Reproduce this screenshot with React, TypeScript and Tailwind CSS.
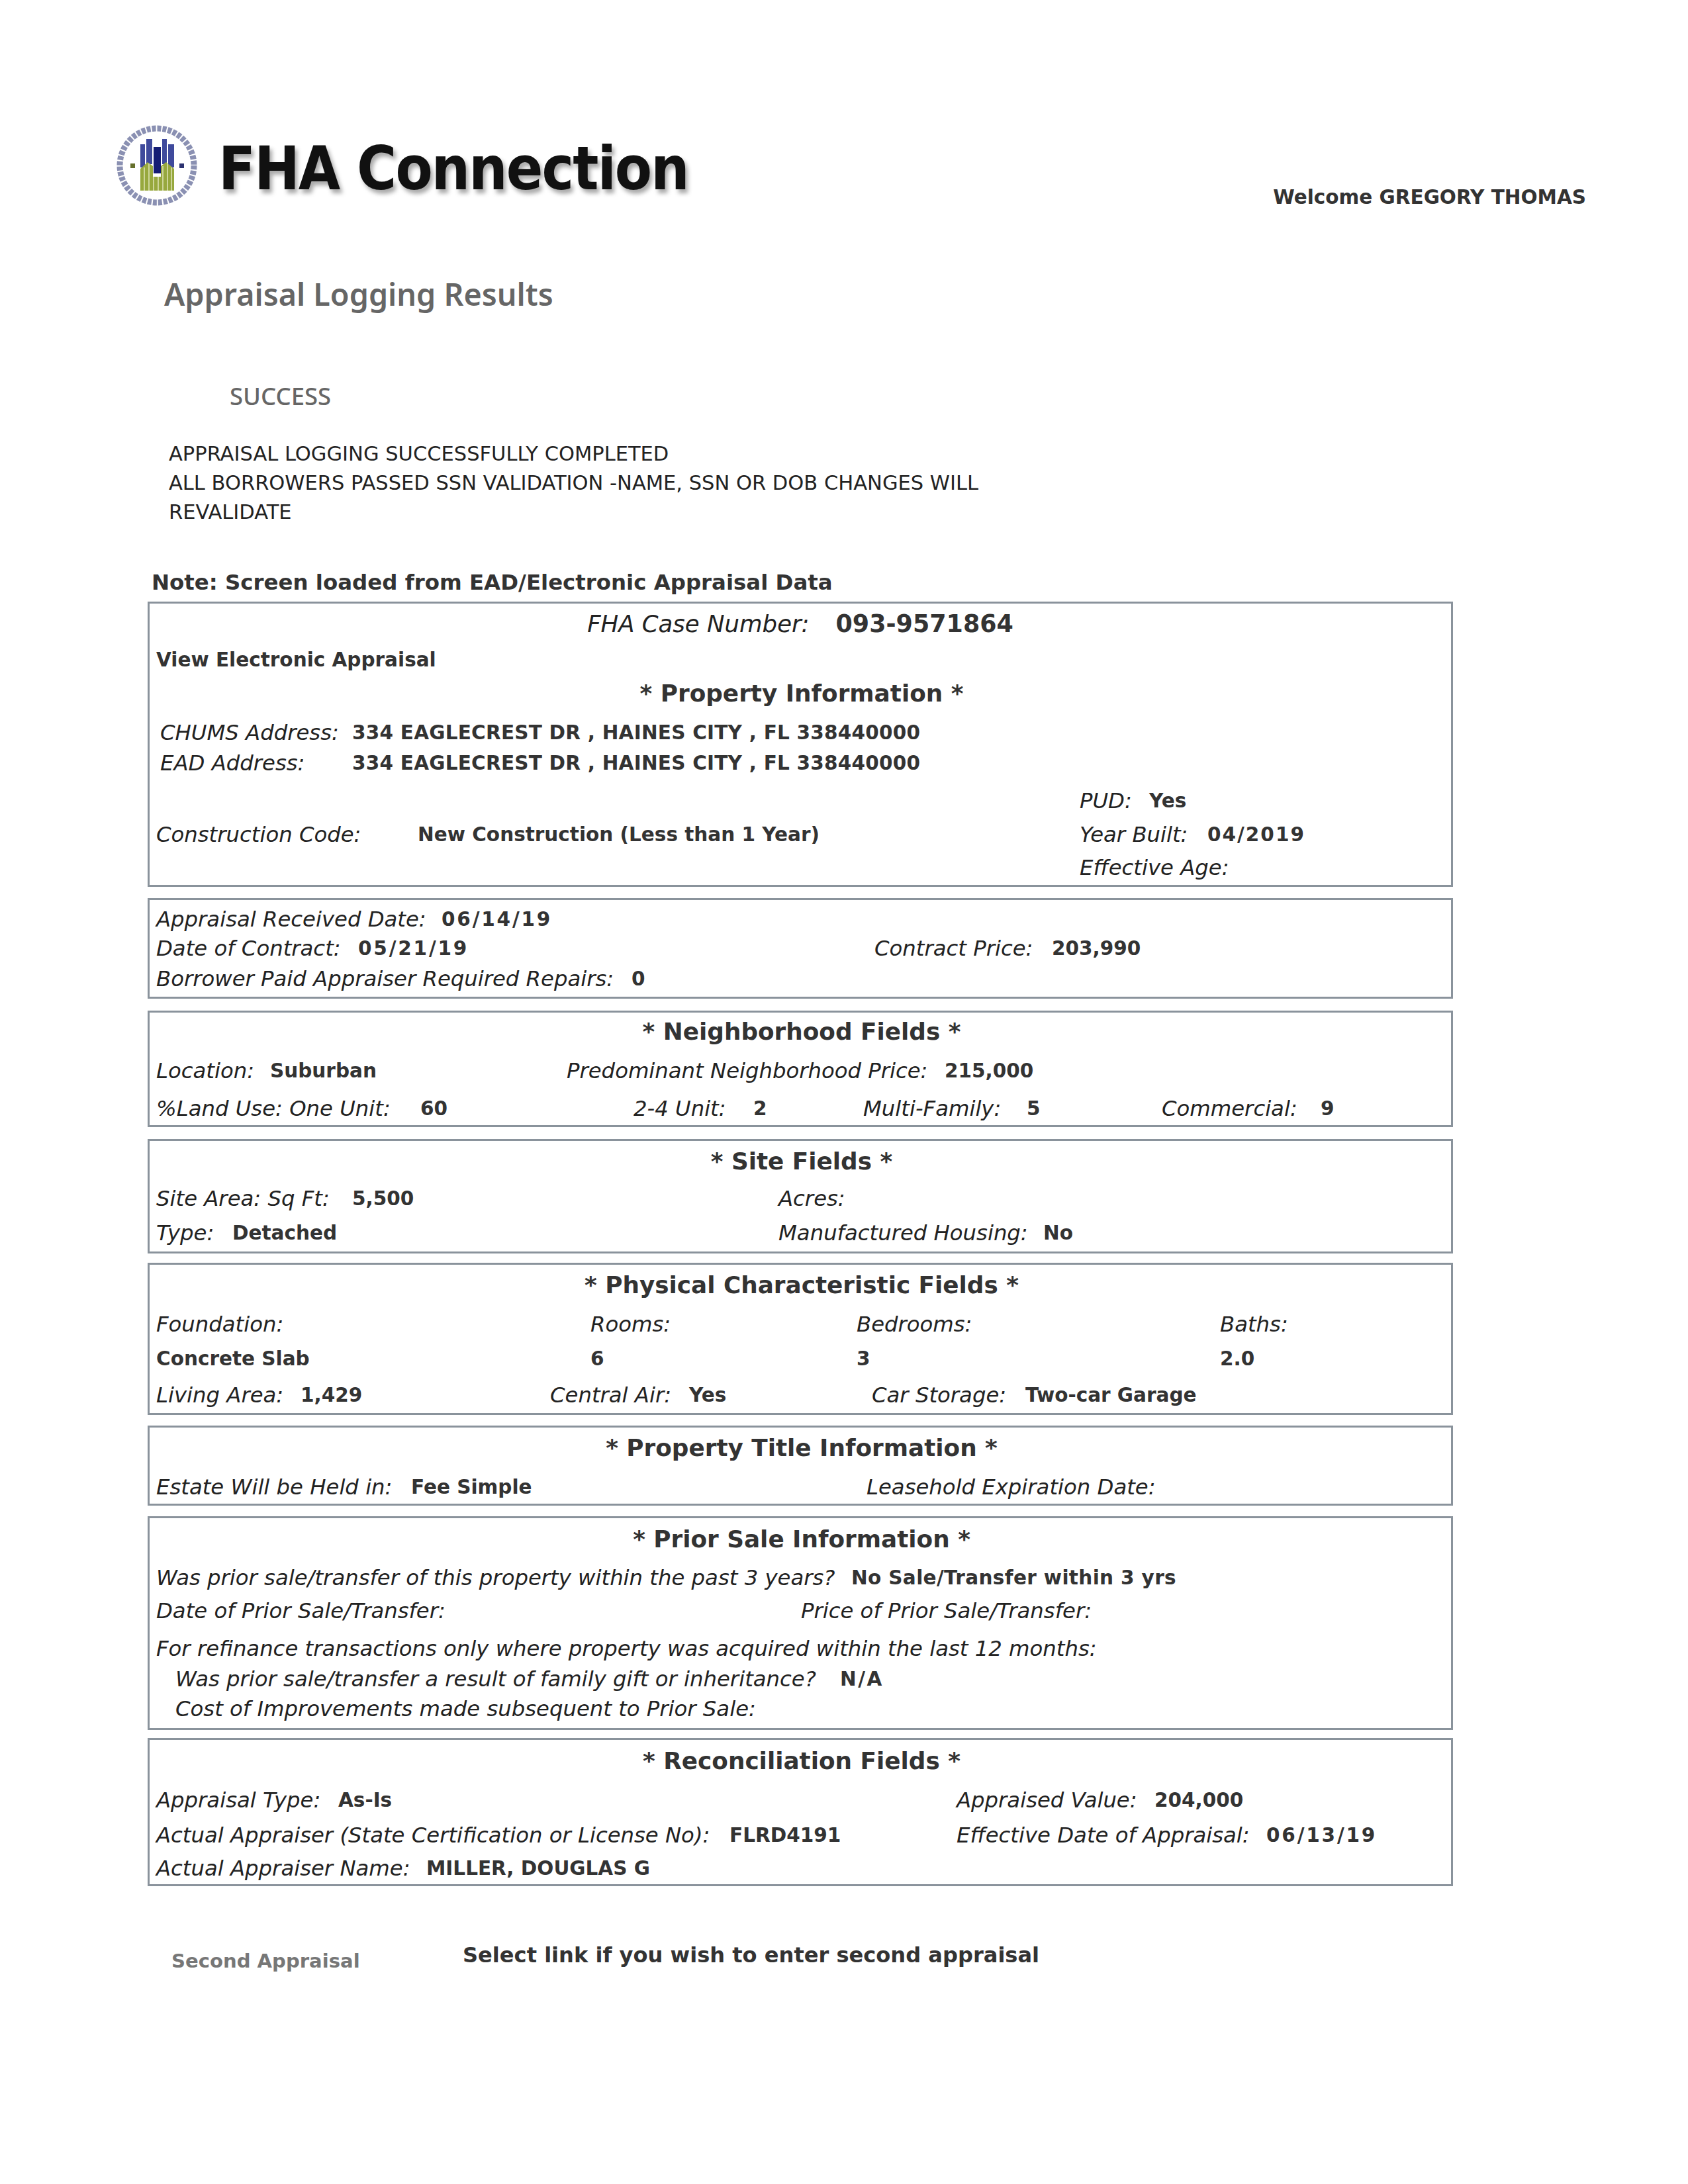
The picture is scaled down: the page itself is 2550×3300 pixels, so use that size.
import type { ReactNode } from 'react';

const Box = ({ className, children }: { className: string; children: ReactNode }) => (
  <div className={`w-[1972px] ml-[223px] border-[3px] border-[#8a939c] pl-[10px] text-[#222] box-border ${className}`}>
    {children}
  </div>
);

const Heading = ({ className, children }: { className: string; children: ReactNode }) => (
  <div className={`flex items-center justify-center font-bold text-[35.8px] text-[#333] pr-[6px] ${className}`}>{children}</div>
);

const L = ({ className = '', children }: { className?: string; children?: ReactNode }) => (
  <span className={`italic text-[32.3px] text-[#222] shrink-0 whitespace-nowrap ${className}`}>{children}</span>
);

const V = ({ className = '', children }: { className?: string; children?: ReactNode }) => (
  <span className={`font-bold text-[29.5px] text-[#333] shrink-0 whitespace-nowrap ${className}`}>{children}</span>
);

function Logo() {
  return (
    <svg viewBox="0 0 130 130" className="w-[130px] h-[130px] shrink-0 blur-[0.7px]">
      <circle cx="66" cy="65" r="56" fill="none" stroke="#8a90b2" strokeWidth="9" strokeDasharray="6 2" />
      <path d="M41 33h7v35h-7zM50 25h9v38h-9zM74 25h7v38h-7zM83 33h9v35h-9z" fill="#3f4a9c" />
      <path d="M61 37h11v40H61z" fill="#141c74" />
      <path d="M41 70l11-10 8 6v16h12V66l8-6 12 10v33H41z" fill="#97a83e" />
      <path d="M47 68v35M54 62v41M61 82v21M68 82v21M75 66v37M82 62v41M88 68v35" stroke="#dfe4b8" strokeWidth="1.5" />
      <rect x="26" y="62" width="7" height="7" fill="#66702c" />
      <rect x="100" y="62" width="7" height="7" fill="#2c3270" />
    </svg>
  );
}

export default function App() {
  return (
    <div className="w-[2550px] h-[3300px] bg-white font-['DejaVu_Sans',sans-serif] overflow-hidden">
      {/* Banner */}
      <div className="h-[185px]" />
      <div className="h-[130px] pl-[171px] flex items-center">
        <Logo />
        <span className="ml-[29px] mt-[8px] [font-stretch:condensed] font-bold text-[91px] tracking-[-1.8px] leading-none text-[#111] [text-shadow:4px_6px_6px_#aaa]">
          FHA Connection
        </span>
        <span className="ml-auto mr-[154px] mt-[96px] font-bold text-[29.5px] text-[#333]">Welcome GREGORY THOMAS</span>
      </div>

      <div className="mt-[106px] ml-[248px] h-[46px] flex items-center font-['Noto_Sans',sans-serif] font-semibold text-[46.7px] text-[#666]">
        Appraisal Logging Results
      </div>
      <div className="mt-[108px] ml-[347px] h-[46px] flex items-center font-['Noto_Sans',sans-serif] font-medium text-[36.5px] text-[#666]">
        SUCCESS
      </div>

      <div className="mt-[43px] ml-[255px] w-[1300px] text-[30.5px] leading-[44px] text-[#222]">
        <div>APPRAISAL LOGGING SUCCESSFULLY COMPLETED</div>
        <div>ALL BORROWERS PASSED SSN VALIDATION -NAME, SSN OR DOB CHANGES WILL</div>
        <div>REVALIDATE</div>
      </div>

      <div className="mt-[64px] ml-[229px] h-[40px] flex items-center font-bold text-[32.4px] text-[#333]">
        Note: Screen loaded from EAD/Electronic Appraisal Data
      </div>

      {/* Property */}
      <Box className="mt-[9px] h-[431px]">
        <div className="h-[62px] flex items-center justify-center pr-[10px]">
          <L className="text-[35.5px]">FHA Case Number:</L>
          <span className="ml-[40px] font-bold text-[36.4px] text-[#333]">093-9571864</span>
        </div>
        <div className="h-[46px] flex items-center"><V>View Electronic Appraisal</V></div>
        <Heading className="h-[56px]">* Property Information *</Heading>
        <div className="h-[46px] mt-[8px] flex items-center pl-[6px]"><L className="w-[290px]">CHUMS Address:</L><V className="tracking-[0.23px]">334 EAGLECREST DR , HAINES CITY , FL 338440000</V></div>
        <div className="h-[46px] flex items-center pl-[6px]"><L className="w-[290px]">EAD Address:</L><V className="tracking-[0.23px]">334 EAGLECREST DR , HAINES CITY , FL 338440000</V></div>
        <div className="flex mt-[9px]">
          <div className="w-[1395px] flex items-center">
            <L className="w-[395px]">Construction Code:</L>
            <V>New Construction (Less than 1 Year)</V>
          </div>
          <div>
            <div className="h-[51px] flex items-center"><L className="w-[105px]">PUD:</L><V>Yes</V></div>
            <div className="h-[50px] flex items-center"><L className="w-[193px]">Year Built:</L><V className="tracking-[2px]">04/2019</V></div>
            <div className="h-[51px] flex items-center"><L>Effective Age:</L></div>
          </div>
        </div>
      </Box>

      {/* Dates */}
      <Box className="mt-[17px] h-[152px]">
        <div className="h-[44px] mt-[7px] flex items-center"><L className="w-[431px]">Appraisal Received Date:</L><V className="tracking-[2.8px]">06/14/19</V></div>
        <div className="h-[45px] flex items-center">
          <L className="w-[305px]">Date of Contract:</L><V className="w-[780px] tracking-[2.8px]">05/21/19</V>
          <L className="w-[268px]">Contract Price:</L><V>203,990</V>
        </div>
        <div className="h-[46px] flex items-center"><L className="w-[718px]">Borrower Paid Appraiser Required Repairs:</L><V>0</V></div>
      </Box>

      {/* Neighborhood */}
      <Box className="mt-[18px] h-[176px]">
        <Heading className="h-[58px]">* Neighborhood Fields *</Heading>
        <div className="h-[60px] flex items-center">
          <L className="w-[172px]">Location:</L><V className="w-[448px]">Suburban</V>
          <L className="w-[571px]">Predominant Neighborhood Price:</L><V>215,000</V>
        </div>
        <div className="h-[54px] flex items-center">
          <L className="w-[399px]">%Land Use: One Unit:</L><V className="w-[322px]">60</V>
          <L className="w-[181px]">2-4 Unit:</L><V className="w-[166px]">2</V>
          <L className="w-[247px]">Multi-Family:</L><V className="w-[204px]">5</V>
          <L className="w-[240px]">Commercial:</L><V>9</V>
        </div>
      </Box>

      {/* Site */}
      <Box className="mt-[18px] h-[173px]">
        <Heading className="h-[62px]">* Site Fields *</Heading>
        <div className="h-[50px] flex items-center">
          <L className="w-[296px]">Site Area: Sq Ft:</L><V className="w-[644px]">5,500</V><L>Acres:</L>
        </div>
        <div className="h-[55px] flex items-center">
          <L className="w-[115px]">Type:</L><V className="w-[825px]">Detached</V>
          <L className="w-[400px]">Manufactured Housing:</L><V>No</V>
        </div>
      </Box>

      {/* Physical */}
      <Box className="mt-[14px] h-[230px]">
        <Heading className="h-[62px]">* Physical Characteristic Fields *</Heading>
        <div className="h-[56px] flex items-center">
          <L className="w-[656px]">Foundation:</L><L className="w-[402px]">Rooms:</L><L className="w-[549px]">Bedrooms:</L><L>Baths:</L>
        </div>
        <div className="h-[48px] flex items-center">
          <V className="w-[656px]">Concrete Slab</V><V className="w-[402px]">6</V><V className="w-[549px]">3</V><V>2.0</V>
        </div>
        <div className="h-[58px] pt-[4px] flex items-center">
          <L className="w-[218px]">Living Area:</L><V className="w-[377px]">1,429</V>
          <L className="w-[210px]">Central Air:</L><V className="w-[276px]">Yes</V>
          <L className="w-[232px]">Car Storage:</L><V>Two-car Garage</V>
        </div>
      </Box>

      {/* Title */}
      <Box className="mt-[16px] h-[121px]">
        <Heading className="h-[62px]">* Property Title Information *</Heading>
        <div className="h-[53px] pt-[3px] flex items-center">
          <L className="w-[385px]">Estate Will be Held in:</L><V className="w-[688px]">Fee Simple</V>
          <L>Leasehold Expiration Date:</L>
        </div>
      </Box>

      {/* Prior sale */}
      <Box className="mt-[16px] h-[323px]">
        <Heading className="h-[62px] pt-[2px]">* Prior Sale Information *</Heading>
        <div className="h-[56px] flex items-center">
          <L className="w-[1050px]">Was prior sale/transfer of this property within the past 3 years?</L><V className="tracking-[0.35px]">No Sale/Transfer within 3 yrs</V>
        </div>
        <div className="h-[44px] flex items-center"><L className="w-[974px]">Date of Prior Sale/Transfer:</L><L>Price of Prior Sale/Transfer:</L></div>
        <div className="h-[46px] mt-[12px] flex items-center"><L>For refinance transactions only where property was acquired within the last 12 months:</L></div>
        <div className="h-[46px] flex items-center pl-[29px]"><L className="w-[1004px]">Was prior sale/transfer a result of family gift or inheritance?</L><V className="tracking-[2.5px]">N/A</V></div>
        <div className="h-[44px] flex items-center pl-[29px]"><L>Cost of Improvements made subsequent to Prior Sale:</L></div>
      </Box>

      {/* Reconciliation */}
      <Box className="mt-[12px] h-[224px]">
        <Heading className="h-[64px]">* Reconciliation Fields *</Heading>
        <div className="h-[54px] flex items-center">
          <L className="w-[275px]">Appraisal Type:</L><V className="w-[934px]">As-Is</V>
          <L className="w-[299px]">Appraised Value:</L><V>204,000</V>
        </div>
        <div className="h-[52px] flex items-center">
          <L className="w-[866px]">Actual Appraiser (State Certification or License No):</L><V className="w-[343px]">FLRD4191</V>
          <L className="w-[468px]">Effective Date of Appraisal:</L><V className="tracking-[2.8px]">06/13/19</V>
        </div>
        <div className="h-[48px] flex items-center"><L className="w-[408px]">Actual Appraiser Name:</L><V>MILLER, DOUGLAS G</V></div>
      </Box>

      <div className="mt-[80px] ml-[259px] flex items-start">
        <span className="w-[440px] mt-[12px] font-bold text-[29.1px] text-[#777]">Second Appraisal</span>
        <span className="font-bold text-[32.1px] text-[#333]">Select link if you wish to enter second appraisal</span>
      </div>
    </div>
  );
}
